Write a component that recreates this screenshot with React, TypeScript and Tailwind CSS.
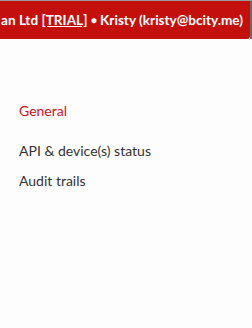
import React from "react";

const MENU = [
  { label: "General", active: true },
  { label: "API & device(s) status", active: false },
  { label: "Audit trails", active: false },
];

export default function App() {
  return (
    <div className="w-[252px] h-[328px] overflow-hidden bg-[#fdfdfd] font-['Lato',sans-serif]">
      <div className="flex border-t border-[#9a9a9a]">
        <div className="flex-1 h-[38px] bg-[#c4100c] rounded-br-[3px] flex items-center justify-end overflow-hidden pr-[7px]">
          <span className="whitespace-nowrap text-white text-[13.6px] font-bold">
            an Ltd <span className="underline">[TRIAL]</span>{" "}
            <span className="text-[10px] align-[1px]">●</span> Kristy (kristy@bcity.me)
          </span>
        </div>
        <div className="w-[2px] h-[38px] bg-[#6b6b6b]" />
      </div>
      <nav className="flex flex-col pt-[56px] pl-[19px]">
        {MENU.map((item) => (
          <a
            key={item.label}
            className={
              "h-[30px] flex items-center text-[14px] " +
              (item.active ? "text-[#d0121b] mb-[10px]" : "text-[#333]")
            }
          >
            {item.label}
          </a>
        ))}
      </nav>
    </div>
  );
}
